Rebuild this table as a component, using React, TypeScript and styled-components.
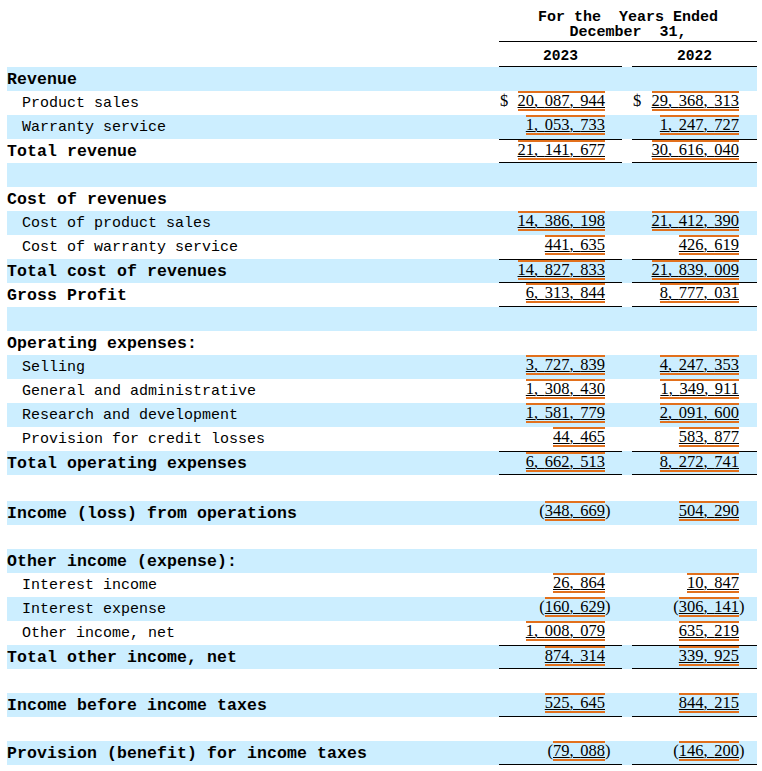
import React from "react";
import styled, { createGlobalStyle } from "styled-components";

const Global = createGlobalStyle`
  html, body { margin: 0; padding: 0; background: #ffffff; }
  body { font-family: "Liberation Mono", monospace; color: #000000; }
`;

const COLS = "492px 123px 10px 125px";
const ORANGE = "#e2701c";
const BLUE = "#cceeff";

const Page = styled.div`
  width: 750px;
  padding-left: 7px;
`;

const Header = styled.div`
  display: grid;
  grid-template-columns: ${COLS};
`;

const Period = styled.div`
  grid-column: 2 / 5;
  grid-row: 1;
  padding: 10px 0 1px;
  border-bottom: 1px solid #000;
  text-align: center;
  font: bold 15px/15px "Liberation Mono", monospace;
  white-space: pre;
`;

const Year = styled.div<{ $col: number }>`
  grid-column: ${(p) => p.$col};
  grid-row: 2;
  height: 25px;
  box-sizing: border-box;
  padding-top: 3px;
  border-bottom: 1px solid #000;
  display: flex;
  align-items: center;
  justify-content: center;
  font: bold 14.6px "Liberation Mono", monospace;
`;

const Row = styled.div<{ $shade: boolean; $h: number }>`
  display: grid;
  grid-template-columns: ${COLS};
  height: ${(p) => p.$h}px;
  background: ${(p) => (p.$shade ? BLUE : "#ffffff")};
`;

const Label = styled.div<{ $bold: boolean; $indent: boolean }>`
  display: flex;
  align-items: center;
  padding-left: ${(p) => (p.$indent ? 15 : 0)}px;
  font-family: "Liberation Mono", monospace;
  font-size: ${(p) => (p.$bold ? 16.5 : 15)}px;
  letter-spacing: ${(p) => (p.$bold ? 0.1 : 0)}px;
  font-weight: ${(p) => (p.$bold ? "bold" : "normal")};
  white-space: pre;
`;

const Amount = styled.div<{ $top: boolean; $bottom: boolean; $pad: number }>`
  display: flex;
  align-items: flex-start;
  box-sizing: border-box;
  padding: 0 ${(p) => p.$pad}px 0 1px;
  border-top: ${(p) => (p.$top ? "1px solid #000" : "none")};
  border-bottom: ${(p) => (p.$bottom ? "1px solid #000" : "none")};
  font-family: "Liberation Serif", serif;
  font-size: 16.5px;
`;

const Dollar = styled.span`
  line-height: 20px;
`;

const Figure = styled.span`
  display: flex;
  margin-left: auto;
`;

const Paren = styled.span<{ $close?: boolean }>`
  line-height: 20px;
  margin-right: ${(p) => (p.$close ? "-5.5px" : "0")};
`;

const Tag = styled.span`
  box-sizing: border-box;
  height: 20px;
  border-top: 2px solid ${ORANGE};
  border-bottom: 2px solid ${ORANGE};
  line-height: 16px;
  text-decoration: underline;
  text-decoration-thickness: 1px;
`;

const Comma = styled.span`
  letter-spacing: 6.6px;
`;

type Line = {
  label?: string;
  bold?: boolean;
  indent?: boolean;
  a?: string;
  b?: string;
  dollar?: boolean;
  top?: boolean;
  bottom?: boolean;
  h?: number;
};

const lines: Line[] = [
  { label: "Revenue", bold: true },
  { label: "Product sales", indent: true, a: "20,087,944", b: "29,368,313", dollar: true },
  { label: "Warranty service", indent: true, a: "1,053,733", b: "1,247,727" },
  { label: "Total revenue", bold: true, a: "21,141,677", b: "30,616,040", top: true, bottom: true },
  {},
  { label: "Cost of revenues", bold: true },
  { label: "Cost of product sales", indent: true, a: "14,386,198", b: "21,412,390" },
  { label: "Cost of warranty service", indent: true, a: "441,635", b: "426,619" },
  { label: "Total cost of revenues", bold: true, a: "14,827,833", b: "21,839,009", top: true, bottom: true },
  { label: "Gross Profit", bold: true, a: "6,313,844", b: "8,777,031", bottom: true },
  {},
  { label: "Operating expenses:", bold: true },
  { label: "Selling", indent: true, a: "3,727,839", b: "4,247,353" },
  { label: "General and administrative", indent: true, a: "1,308,430", b: "1,349,911" },
  { label: "Research and development", indent: true, a: "1,581,779", b: "2,091,600" },
  { label: "Provision for credit losses", indent: true, a: "44,465", b: "583,877" },
  { label: "Total operating expenses", bold: true, a: "6,662,513", b: "8,272,741", top: true, bottom: true },
  { h: 26 },
  { label: "Income (loss) from operations", bold: true, a: "(348,669)", b: "504,290" },
  {},
  { label: "Other income (expense):", bold: true },
  { label: "Interest income", indent: true, a: "26,864", b: "10,847" },
  { label: "Interest expense", indent: true, a: "(160,629)", b: "(306,141)" },
  { label: "Other income, net", indent: true, a: "1,008,079", b: "635,219" },
  { label: "Total other income, net", bold: true, a: "874,314", b: "339,925", top: true, bottom: true },
  {},
  { label: "Income before income taxes", bold: true, a: "525,645", b: "844,215", bottom: true },
  {},
  { label: "Provision (benefit) for income taxes", bold: true, a: "(79,088)", b: "(146,200)", bottom: true },
];

function Digits({ value }: { value: string }) {
  const parts = value.split(",");
  return (
    <>
      {parts.map((p, i) => (
        <React.Fragment key={i}>
          {p}
          {i < parts.length - 1 && <Comma>,</Comma>}
        </React.Fragment>
      ))}
    </>
  );
}

function Cell({ value, dollar, top, bottom, pad }: { value?: string; dollar?: boolean; top?: boolean; bottom?: boolean; pad: number }) {
  const neg = !!value && value.startsWith("(");
  const core = value ? value.replace(/[()]/g, "") : "";
  return (
    <Amount $top={!!top} $bottom={!!bottom} $pad={pad}>
      {dollar && <Dollar>$</Dollar>}
      {value && (
        <Figure>
          {neg && <Paren>(</Paren>}
          <Tag>
            <Digits value={core} />
          </Tag>
          {neg && <Paren $close>)</Paren>}
        </Figure>
      )}
    </Amount>
  );
}

export default function App() {
  return (
    <Page>
      <Global />
      <Header>
        <Period>{"For the  Years Ended\nDecember  31,"}</Period>
        <Year $col={2}>2023</Year>
        <Year $col={4}>2022</Year>
      </Header>
      {lines.map((l, i) => (
        <Row key={i} $shade={i % 2 === 0} $h={l.h ?? 24}>
          <Label $bold={!!l.bold} $indent={!!l.indent}>{l.label ?? ""}</Label>
          <Cell value={l.a} dollar={l.dollar} top={l.top && !!l.a} bottom={l.bottom && !!l.a} pad={17} />
          <div />
          <Cell value={l.b} dollar={l.dollar} top={l.top && !!l.b} bottom={l.bottom && !!l.b} pad={18} />
        </Row>
      ))}
    </Page>
  );
}
